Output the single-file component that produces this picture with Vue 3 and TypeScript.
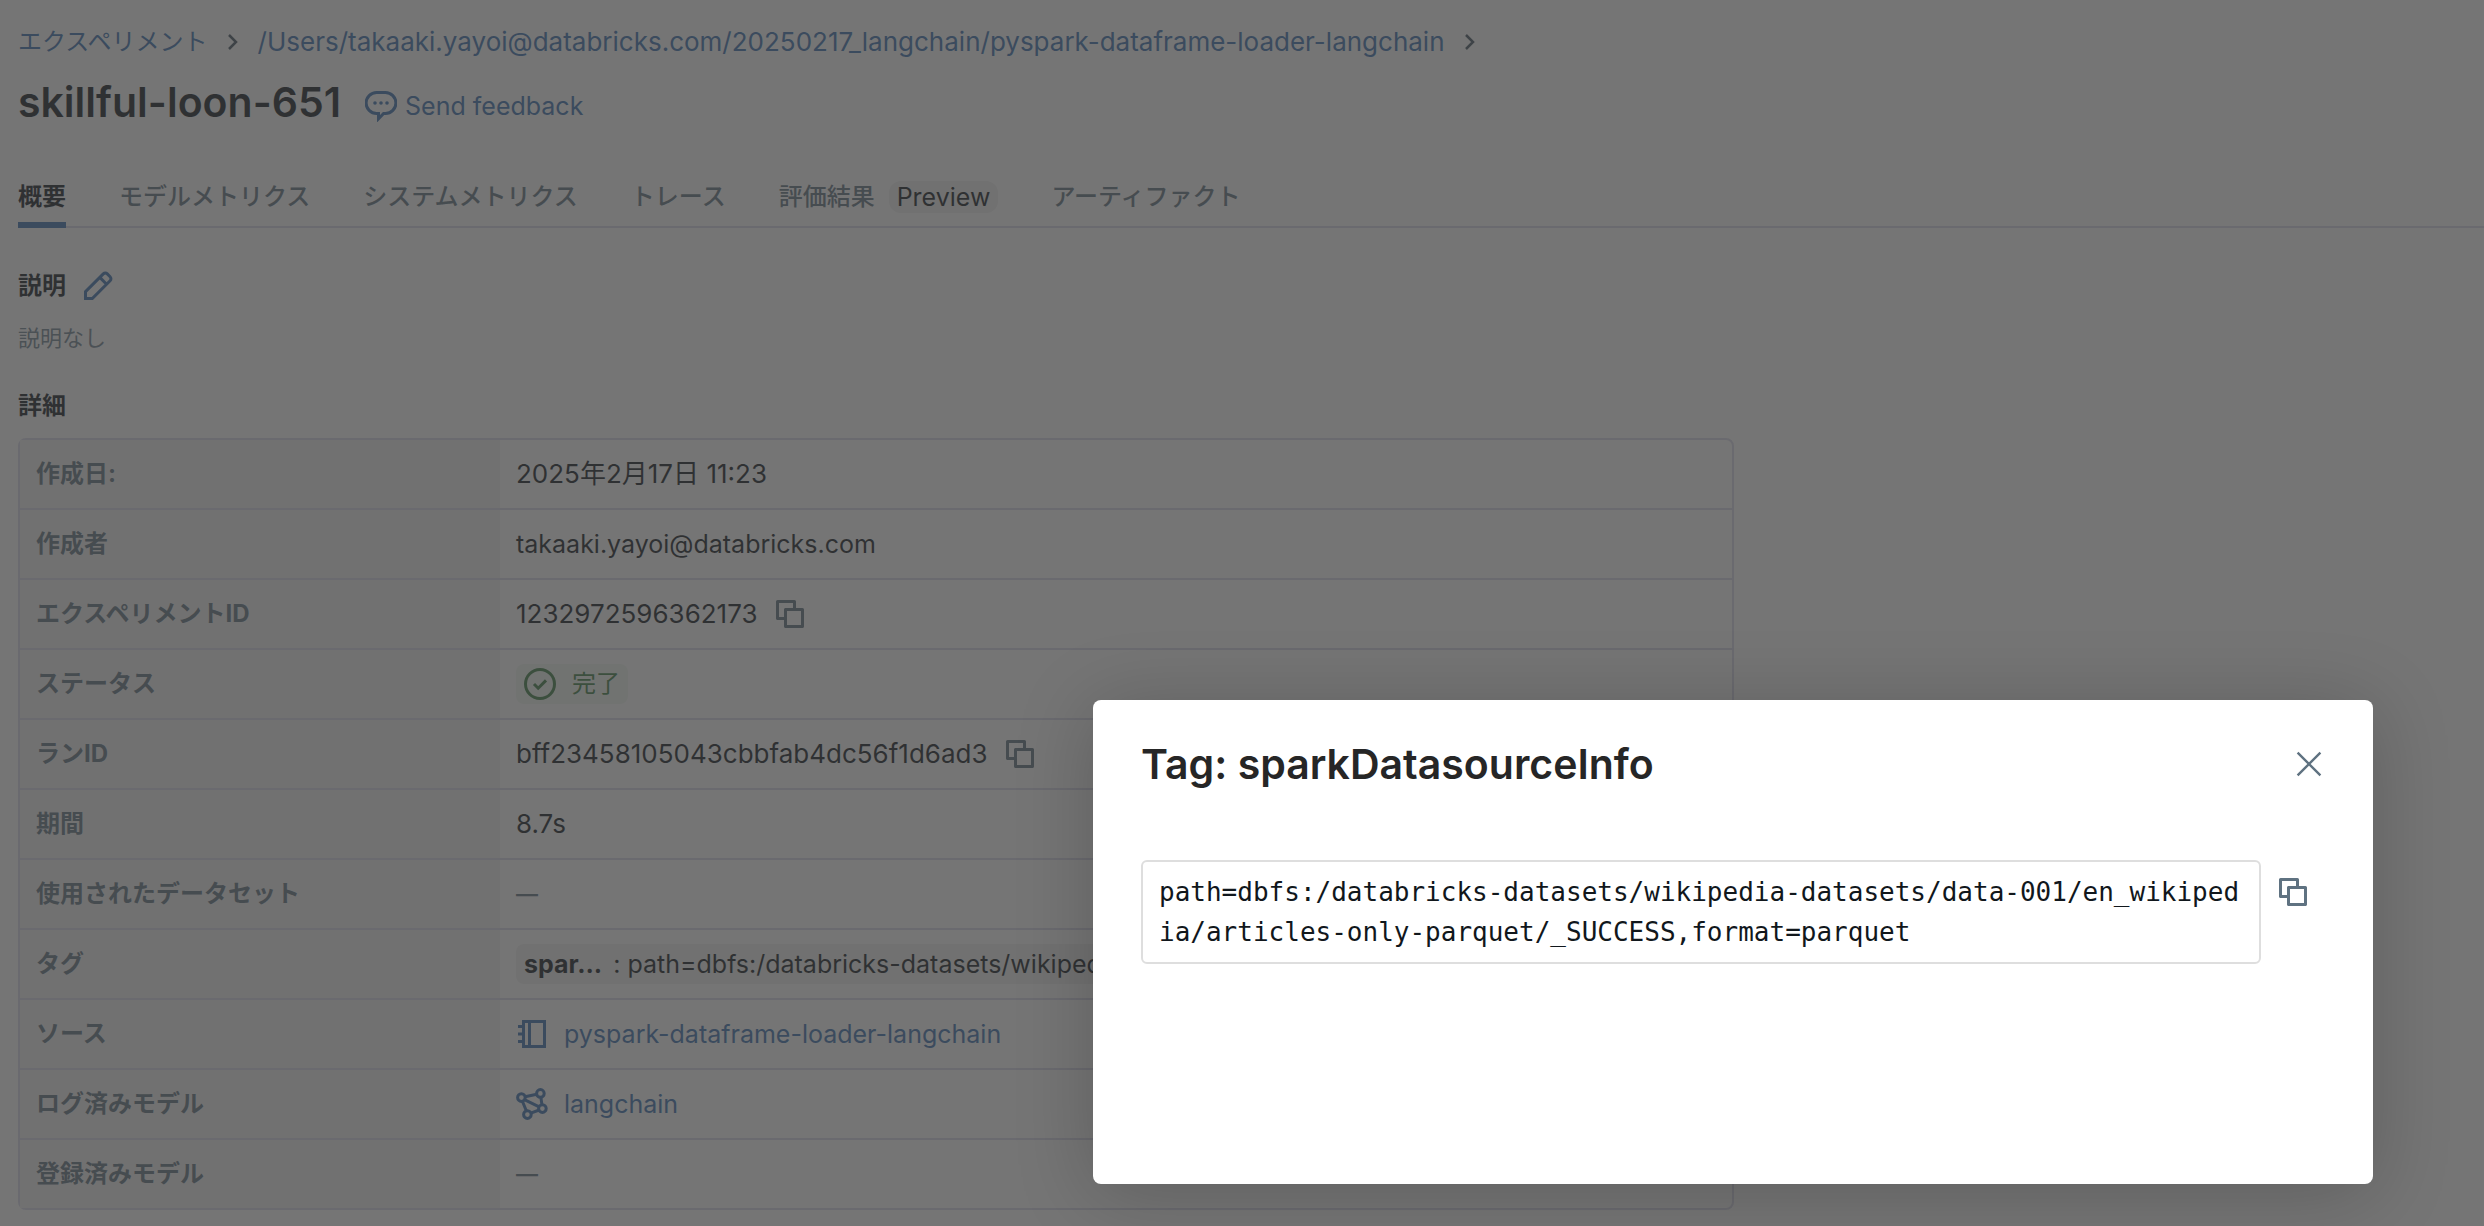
<script setup lang="ts">
import { defineComponent, h } from 'vue'

type Row = {
  label: string
  value?: string
  kind: 'text' | 'number' | 'copy' | 'status' | 'empty' | 'tag' | 'notebook' | 'model'
}

const rows: Row[] = [
  { label: '作成日:', value: '2025年2月17日 11:23', kind: 'number' },
  { label: '作成者', value: 'takaaki.yayoi@databricks.com', kind: 'text' },
  { label: 'エクスペリメントID', value: '1232972596362173', kind: 'copy' },
  { label: 'ステータス', value: '完了', kind: 'status' },
  { label: 'ランID', value: 'bff23458105043cbbfab4dc56f1d6ad3', kind: 'copy' },
  { label: '期間', value: '8.7s', kind: 'number' },
  { label: '使用されたデータセット', kind: 'empty' },
  { label: 'タグ', value: 'path=dbfs:/databricks-datasets/wikipedia...', kind: 'tag' },
  { label: 'ソース', value: 'pyspark-dataframe-loader-langchain', kind: 'notebook' },
  { label: 'ログ済みモデル', value: 'langchain', kind: 'model' },
  { label: '登録済みモデル', kind: 'empty' },
]

const tabs = [
  { label: '概要', active: true },
  { label: 'モデルメトリクス' },
  { label: 'システムメトリクス' },
  { label: 'トレース' },
  { label: '評価結果', badge: 'Preview' },
  { label: 'アーティファクト' },
]

const tagValue =
  'path=dbfs:/databricks-datasets/wikipedia-datasets/data-001/en_wikipedia/articles-only-parquet/_SUCCESS,format=parquet'

const CopyIcon = defineComponent({
  render: () =>
    h('svg', { viewBox: '0 0 16 16', width: 32, height: 32, fill: 'currentColor', 'aria-hidden': 'true' }, [
      h('path', {
        'fill-rule': 'evenodd',
        d: 'M1.75 1a.75.75 0 0 0-.75.75v8.5c0 .41.34.75.75.75H5v3.25c0 .41.34.75.75.75h8.5c.41 0 .75-.34.75-.75v-8.5a.75.75 0 0 0-.75-.75H11V1.75a.75.75 0 0 0-.75-.75h-8.5ZM9.5 5V2.5h-7v7H5V5.75c0-.41.34-.75.75-.75H9.5Zm-3 8.5v-7h7v7h-7Z',
      }),
    ]),
})
</script>

<template>
  <div class="page">
    <nav class="breadcrumb" aria-label="breadcrumb">
      <a href="#">エクスペリメント</a>
      <svg class="chevron" viewBox="0 0 12 20" aria-hidden="true"><path d="M2 3l7 7-7 7" /></svg>
      <a href="#" class="data">/Users/takaaki.yayoi@databricks.com/20250217_langchain/pyspark-dataframe-loader-langchain</a>
      <svg class="chevron" viewBox="0 0 12 20" aria-hidden="true"><path d="M2 3l7 7-7 7" /></svg>
    </nav>

    <header class="heading">
      <h1>skillful-loon-651</h1>
      <a href="#" class="feedback">
        <svg class="icon" viewBox="0 0 16 16" aria-hidden="true">
          <path class="line" d="M5.8 1.25h4.4a5 5 0 0 1 0 10.5h-.9L6.75 14.4v-2.65H5.8a5 5 0 0 1 0-10.5Z" />
          <circle cx="5" cy="6.5" r="0.9" /><circle cx="8" cy="6.5" r="0.9" /><circle cx="11" cy="6.5" r="0.9" />
        </svg>
        Send feedback
      </a>
    </header>

    <div class="tabs" role="tablist">
      <button
        v-for="tab in tabs"
        :key="tab.label"
        type="button"
        role="tab"
        :aria-selected="!!tab.active"
        :class="['tab', { active: tab.active }]"
      >
        {{ tab.label }}<span v-if="tab.badge" class="badge">{{ tab.badge }}</span>
      </button>
    </div>

    <section class="details">
      <h2>
        説明
        <button type="button" class="icon-button edit" aria-label="編集">
          <svg class="icon" viewBox="0 0 16 16" aria-hidden="true">
            <path class="line" d="M1.75 14.25v-3.4l8.9-8.9a1.4 1.4 0 0 1 2 0l1.4 1.4a1.4 1.4 0 0 1 0 2l-8.9 8.9H1.75ZM8.9 3.7l3.4 3.4" />
          </svg>
        </button>
      </h2>
      <p class="hint">説明なし</p>
      <h2>詳細</h2>

      <table>
        <tbody>
          <tr v-for="row in rows" :key="row.label">
            <th scope="row">{{ row.label }}</th>
            <td>
              <div class="cell">
                <template v-if="row.kind === 'text'">{{ row.value }}</template>
                <span v-else-if="row.kind === 'number'" class="data">{{ row.value }}</span>
                <template v-else-if="row.kind === 'copy'">
                  <span class="data">{{ row.value }}</span>
                  <button type="button" class="icon-button" aria-label="コピー"><CopyIcon /></button>
                </template>
                <span v-else-if="row.kind === 'status'" class="status">
                  <svg class="icon" viewBox="0 0 16 16" aria-hidden="true">
                    <circle class="line" cx="8" cy="8" r="7.25" />
                    <path class="line" d="M5 8l2.1 2.1L11 6.2" />
                  </svg>
                  {{ row.value }}
                </span>
                <span v-else-if="row.kind === 'tag'" class="tag"><b>spar...</b><span>: {{ row.value }}</span></span>
                <a v-else-if="row.kind === 'notebook'" href="#" class="resource">
                  <svg class="icon" viewBox="0 0 16 16" aria-hidden="true">
                    <path class="line" d="M3.75 1.75h10.5v12.5H3.75ZM6.75 1.75v12.5M1 4.25h2.75M1 8h2.75M1 11.75h2.75" />
                  </svg>
                  {{ row.value }}
                </a>
                <a v-else-if="row.kind === 'model'" href="#" class="resource">
                  <svg class="icon" viewBox="0 0 16 16" aria-hidden="true">
                    <path class="line" d="M4.5 4.4l5.9-1.3M12.4 4.5l.6 4M3.2 6.6l2 4.9M4.2 5.8l7.4 3.6M7.4 12.6l4.2-1.6" />
                    <circle class="line" cx="2.7" cy="4.8" r="1.9" /><circle class="line" cx="12.2" cy="2.7" r="1.9" />
                    <circle class="line" cx="13.2" cy="10.3" r="1.9" /><circle class="line" cx="5.7" cy="13.3" r="1.9" />
                  </svg>
                  {{ row.value }}
                </a>
                <span v-else class="empty">—</span>
              </div>
            </td>
          </tr>
        </tbody>
      </table>
    </section>

    <div class="overlay"></div>
    <div class="modal" role="dialog" aria-modal="true" aria-labelledby="modal-title">
      <div class="modal-head">
        <h2 id="modal-title">Tag: sparkDatasourceInfo</h2>
        <button type="button" class="icon-button" aria-label="閉じる">
          <svg class="icon" viewBox="0 0 16 16" aria-hidden="true"><path class="thin" d="M2.3 2.3l11.4 11.4M13.7 2.3L2.3 13.7" /></svg>
        </button>
      </div>
      <div class="modal-body">
        <pre>{{ tagValue }}</pre>
        <button type="button" class="icon-button" aria-label="コピー"><CopyIcon /></button>
      </div>
    </div>
  </div>
</template>

<style>
body {
  margin: 0;
  background: #fff;
}
</style>

<style scoped>
.page {
  position: relative;
  box-sizing: border-box;
  min-height: 100vh;
  padding: 22px 0 14px 18px;
  overflow: hidden;
  color: #11171c;
  font: 24px/40px Inter, "Noto Sans CJK JP", sans-serif;
}
a {
  color: #3870b0;
  text-decoration: none;
}
button {
  margin: 0;
  padding: 0;
  border: 0;
  background: none;
  color: inherit;
  font: inherit;
}
svg {
  display: block;
  flex: none;
}
.icon {
  width: 32px;
  height: 32px;
  fill: currentColor;
}
.line,
.thin {
  fill: none;
  stroke: currentColor;
  stroke-width: 1.5;
}
.thin {
  stroke-width: 1.2;
}
.breadcrumb {
  display: flex;
  align-items: center;
  gap: 19px;
}
.data {
  font-size: 26px;
}
.chevron {
  width: 12px;
  height: 20px;
  fill: none;
  stroke: #445461;
  stroke-width: 2.5;
}
.heading {
  display: flex;
  align-items: center;
  gap: 24px;
  margin-top: 8px;
}
h1,
h2,
p {
  margin: 0;
}
h1,
#modal-title {
  font-size: 41px;
  line-height: 64px;
  font-weight: 600;
}
.feedback {
  display: flex;
  align-items: center;
  gap: 8px;
  margin-top: 8px;
  font-size: 25px;
}
.tabs {
  display: flex;
  gap: 53px;
  margin-top: 36px;
  border-bottom: 2px solid #d9d9ea;
}
.tab {
  display: flex;
  align-items: center;
  gap: 14px;
  box-sizing: border-box;
  height: 58px;
  padding-top: 2px;
  margin-bottom: -2px;
  border-bottom: 6px solid transparent;
  color: #5f7281;
  font-weight: 500;
}
.tab.active {
  border-color: #3870b0;
  color: #11171c;
  font-weight: 700;
}
.badge {
  padding: 0 8px;
  border-radius: 12px;
  background: #f0f0f0;
  color: #11171c;
  font-size: 25px;
  line-height: 32px;
  font-weight: 400;
}
.details {
  padding: 38px 14px 0 0;
}
h2 {
  display: flex;
  align-items: center;
  gap: 16px;
  font-size: 24px;
  line-height: 40px;
  font-weight: 600;
}
.hint {
  margin: 12px 0 28px;
  color: #6f8292;
  font-size: 22px;
}
table {
  width: 70%;
  margin-top: 12px;
  border: 2px solid #d9d9ea;
  border-radius: 8px;
  border-spacing: 0;
  table-layout: fixed;
}
th,
td {
  height: 68px;
  padding: 0 16px;
  border-bottom: 2px solid #d9d9ea;
  text-align: left;
}
tr:last-child > * {
  border-bottom: 0;
}
th {
  width: 448px;
  background: #f1f1f1;
  color: #5f7281;
  font-weight: 700;
}
.cell,
.resource {
  display: flex;
  align-items: center;
  gap: 16px;
  font-size: 25px;
  white-space: nowrap;
}
.icon-button {
  color: #5f7281;
}
.edit {
  color: #3870b0;
}
.status,
.tag {
  display: flex;
  align-items: center;
  border-radius: 8px;
}
.status {
  gap: 16px;
  padding: 0 8px;
  background: #f1f8f1;
  color: #3c7c44;
  font-size: 24px;
}
.tag {
  gap: 11px;
  padding: 0 8px;
  background: #f0f0f0;
}
.empty {
  color: #5f7281;
  font-size: 22px;
  font-weight: 600;
}
.overlay {
  position: absolute;
  inset: 0;
  background: rgba(60, 60, 60, 0.71);
}
.modal {
  position: absolute;
  top: 700px;
  right: 111px;
  box-sizing: border-box;
  width: 1280px;
  min-height: 484px;
  padding: 32px 48px;
  border-radius: 8px;
  background: #fff;
  box-shadow: 0 8px 80px rgba(0, 0, 0, 0.2);
}
#modal-title {
  color: #262626;
}
.modal-head {
  display: flex;
  align-items: center;
  justify-content: space-between;
}
.modal-body {
  display: flex;
  align-items: flex-start;
  gap: 16px;
  margin-top: 64px;
  padding-right: 16px;
}
.modal-body .icon-button {
  margin-top: 16px;
}
pre {
  flex: 1;
  margin: 0;
  padding: 10px 16px;
  border: 2px solid #dedede;
  border-radius: 6px;
  font: 26px/40px "DejaVu Sans Mono", monospace;
  white-space: pre-wrap;
  word-break: break-all;
}
</style>
